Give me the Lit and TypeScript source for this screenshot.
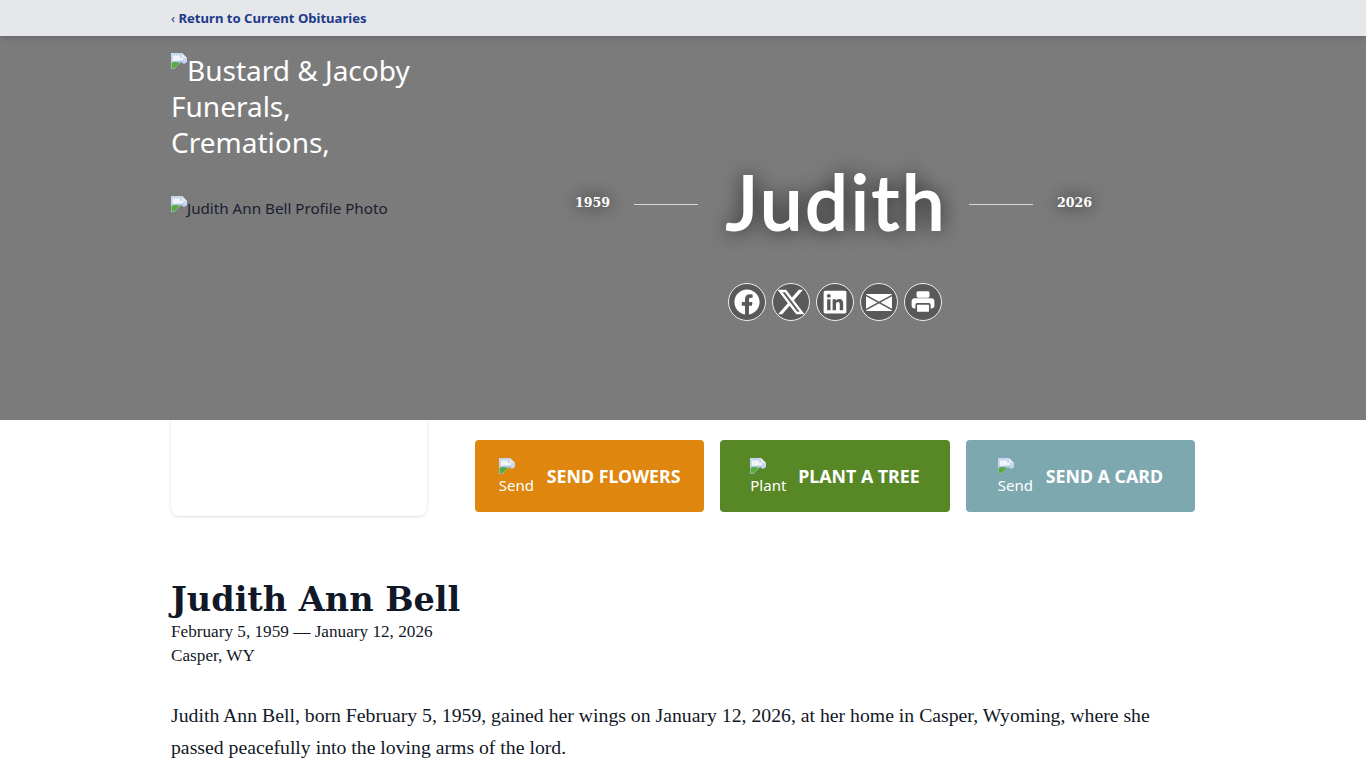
import { LitElement, html, css, svg } from 'lit';
import { customElement } from 'lit/decorators.js';

const brokenImage = html`<svg class="broken" viewBox="0 0 16 16" width="16" height="16" aria-hidden="true">
  <path d="M0 0H11L16 5V9L13 11L10 9L6 13L3 16H0Z" fill="#c9d7ee" />
  <path d="M2 2.5H9V5H12V7L2 8Z" fill="#f1f4fb" />
  <path d="M1 8H12L13 10.5L10 9L6 13L3 16H0.5Z" fill="#a9c7e8" />
  <path d="M0.5 15.5V10C3 8.5 6 9 9 10L6 13L3 15.5Z" fill="#58ac3e" />
  <path d="M11 0L16 5H11Z" fill="#e6e9ef" />
</svg>`;

const facebook = 'M504 256C504 119 393 8 256 8S8 119 8 256c0 123.78 90.69 226.38 209.25 245V327.69h-63V256h63v-54.64c0-62.15 37-96.48 93.67-96.48 27.14 0 55.52 4.84 55.52 4.84v61h-31.28c-30.8 0-40.41 19.12-40.41 38.73V256h68.78l-11 71.69h-57.78V501C413.31 482.38 504 379.78 504 256z';
const xLogo = 'M389.2 48h70.6L305.6 224.2 487 464H345L233.7 318.6 106.5 464H35.8L200.7 275.5 26.8 48H172.4L272.9 180.9 389.2 48zM364.4 421.8h39.1L151.1 88h-42L364.4 421.8z';
const linkedin = 'M416 32H31.9C14.3 32 0 46.5 0 64.3v383.4C0 465.5 14.3 480 31.9 480H416c17.6 0 32-14.5 32-32.3V64.3c0-17.8-14.4-32.3-32-32.3zM135.4 416H69V202.2h66.5V416zm-33.2-243c-21.3 0-38.5-17.3-38.5-38.5S80.9 96 102.2 96c21.2 0 38.5 17.3 38.5 38.5 0 21.3-17.2 38.5-38.5 38.5zm282.1 243h-66.4V312c0-24.8-.5-56.7-34.5-56.7-34.6 0-39.9 27-39.9 54.9V416h-66.4V202.2h63.7v29.2h.9c8.9-16.8 30.6-34.5 62.9-34.5 67.2 0 79.7 44.3 79.7 101.9V416z';

const shareIcons = [
  html`<svg viewBox="0 0 512 512" width="26" height="26">${svg`<path d=${facebook} />`}</svg>`,
  html`<svg viewBox="0 0 512 512" width="30" height="30">${svg`<path d=${xLogo} />`}</svg>`,
  html`<svg viewBox="0 0 448 512" width="26" height="26">${svg`<path d=${linkedin} />`}</svg>`,
  html`<svg viewBox="0 0 26 17" width="26" height="17">
    <rect width="26" height="17" rx="1" />
    <path d="M0 1.5L26 15.5M26 1.5L0 15.5" fill="none" stroke="#595959" stroke-width="1.5" />
  </svg>`,
  html`<svg viewBox="0 0 24 24" width="26" height="26">
    <rect x="6" y="2" width="12" height="6" rx="1.5" />
    <rect x="1.5" y="8.5" width="21" height="9.5" rx="3" />
    <rect x="5" y="13" width="14" height="9" rx="1.5" fill="#595959" />
    <rect x="6.5" y="14.5" width="11" height="6.5" rx="0.5" />
  </svg>`,
];

const actions = [
  { alt: 'Send', label: 'SEND FLOWERS', tone: 'flowers' },
  { alt: 'Plant', label: 'PLANT A TREE', tone: 'tree' },
  { alt: 'Send', label: 'SEND A CARD', tone: 'card' },
];

@customElement('app-root')
export class AppRoot extends LitElement {
  static styles = css`
    :host {
      display: block;
      background: #fff;
      color: #111827;
      font-family: 'Noto Sans', 'Open Sans', sans-serif;
      height: 768px;
      overflow: hidden;
    }
    .wrap {
      width: 1024px;
      margin-left: 171px;
      position: relative;
    }
    .topbar {
      height: 36px;
      background: #e5e7eb;
      box-shadow: 0 4px 6px -1px rgba(0, 0, 0, 0.1), 0 2px 4px -2px rgba(0, 0, 0, 0.1);
      position: relative;
      z-index: 2;
      font-size: 13.1px;
      font-weight: 700;
      line-height: 36px;
    }
    .topbar a {
      color: #1e3a8a;
      text-decoration: none;
    }
    .chev {
      font-weight: 400;
    }
    .hero {
      height: 384px;
      background: rgba(90, 90, 90, 0.8);
      position: relative;
      z-index: 1;
    }
    .hero .wrap {
      display: flex;
      gap: 48px;
      height: 100%;
    }
    .broken {
      display: inline-block;
      vertical-align: top;
    }
    .side {
      width: 256px;
      flex: none;
    }
    .logo {
      padding-top: 16px;
      color: #fff;
      font-size: 28px;
      line-height: 36px;
      height: 144px;
      overflow: hidden;
    }
    .logo .broken {
      margin-top: 1px;
    }
    .photo-alt {
      font-size: 15.2px;
      line-height: 24px;
      color: #1a2030;
      white-space: nowrap;
    }
    .main {
      flex: 1;
      display: flex;
      flex-direction: column;
      align-items: center;
      padding-top: 124px;
    }
    .name-row {
      display: flex;
      align-items: center;
      height: 88px;
      margin-right: 3px;
    }
    .year {
      font-family: 'DejaVu Serif', serif;
      font-weight: 700;
      font-size: 12.6px;
      color: #fff;
      text-shadow: 0 0 16px rgba(0, 0, 0, 0.8);
      text-align: center;
      position: relative;
      top: -2px;
    }
    .rule {
      width: 64px;
      height: 1px;
      background: #d6d6d6;
      margin: 0 24px;
    }
    .name {
      font-family: 'Lato', sans-serif;
      font-size: 76px;
      line-height: 88px;
      padding-bottom: 6px;
      color: #fff;
      text-shadow: 0 0 20px rgba(0, 0, 0, 0.9);
      -webkit-text-stroke: 2px #fff;
      letter-spacing: 2.9px;
      text-indent: 4px;
      width: 223px;
      text-align: center;
      white-space: nowrap;
    }
    .share {
      display: flex;
      gap: 6px;
      margin-top: 35px;
    }
    .share span {
      width: 38px;
      height: 38px;
      box-sizing: border-box;
      border: 1.5px solid #eee;
      border-radius: 50%;
      background: #595959;
      display: flex;
      align-items: center;
      justify-content: center;
    }
    .share svg {
      fill: #fff;
    }
    .photo {
      position: absolute;
      left: 0;
      top: -224px;
      width: 256px;
      height: 320px;
      border-radius: 8px;
      box-shadow: 0 1px 3px rgba(0, 0, 0, 0.12), 0 0 1px rgba(0, 0, 0, 0.08);
    }
    .actions {
      display: flex;
      gap: 16px;
      margin-left: 304px;
      padding-top: 20px;
    }
    .action {
      flex: 1;
      height: 72px;
      border-radius: 4px;
      color: #fff;
      display: flex;
      align-items: center;
      justify-content: center;
      gap: 12px;
      font-size: 17.8px;
      font-weight: 700;
    }
    .flowers { background: #de860d; }
    .tree { background: #588726; }
    .card { background: #7ea8b0; }
    .alt {
      width: 36px;
      font-size: 15px;
      font-weight: 400;
      line-height: 20px;
    }
    .alt .broken {
      display: block;
    }
    .alt-text {
      display: block;
      margin-top: 1px;
    }
    .obit {
      font-family: 'Liberation Serif', serif;
      padding-top: 68px;
    }
    h1 {
      margin: 0;
      font-family: 'DejaVu Serif', serif;
      font-size: 33.5px;
      line-height: 40px;
      font-weight: 700;
    }
    .meta {
      font-size: 17.2px;
      line-height: 24px;
    }
    p {
      margin: 31px 0 0;
      max-width: 1010px;
      font-size: 19.74px;
      line-height: 32px;
    }
  `;

  render() {
    return html`
      <div class="topbar">
        <div class="wrap"><a href="#"><span class="chev">‹</span> Return to Current Obituaries</a></div>
      </div>
      <header class="hero">
        <div class="wrap">
          <div class="side">
            <div class="logo">${brokenImage}Bustard &amp; Jacoby Funerals, Cremations,</div>
            <div class="photo-alt">${brokenImage}Judith Ann Bell Profile Photo</div>
          </div>
          <div class="main">
            <div class="name-row">
              <span class="year">1959</span>
              <span class="rule"></span>
              <span class="name">Judith</span>
              <span class="rule"></span>
              <span class="year">2026</span>
            </div>
            <div class="share">
              ${shareIcons.map((icon) => html`<span>${icon}</span>`)}
            </div>
          </div>
        </div>
      </header>
      <div class="wrap">
        <div class="photo"></div>
        <div class="actions">
          ${actions.map(
            (a) => html`<div class="action ${a.tone}">
              <span class="alt">${brokenImage}<span class="alt-text">${a.alt}</span></span>
              <span>${a.label}</span>
            </div>`
          )}
        </div>
        <section class="obit">
          <h1>Judith Ann Bell</h1>
          <div class="meta">February 5, 1959 — January 12, 2026</div>
          <div class="meta">Casper, WY</div>
          <p>
            Judith Ann Bell, born February 5, 1959, gained her wings on January 12, 2026, at her home in Casper, Wyoming, where she
            passed peacefully into the loving arms of the lord.
          </p>
        </section>
      </div>
    `;
  }
}
